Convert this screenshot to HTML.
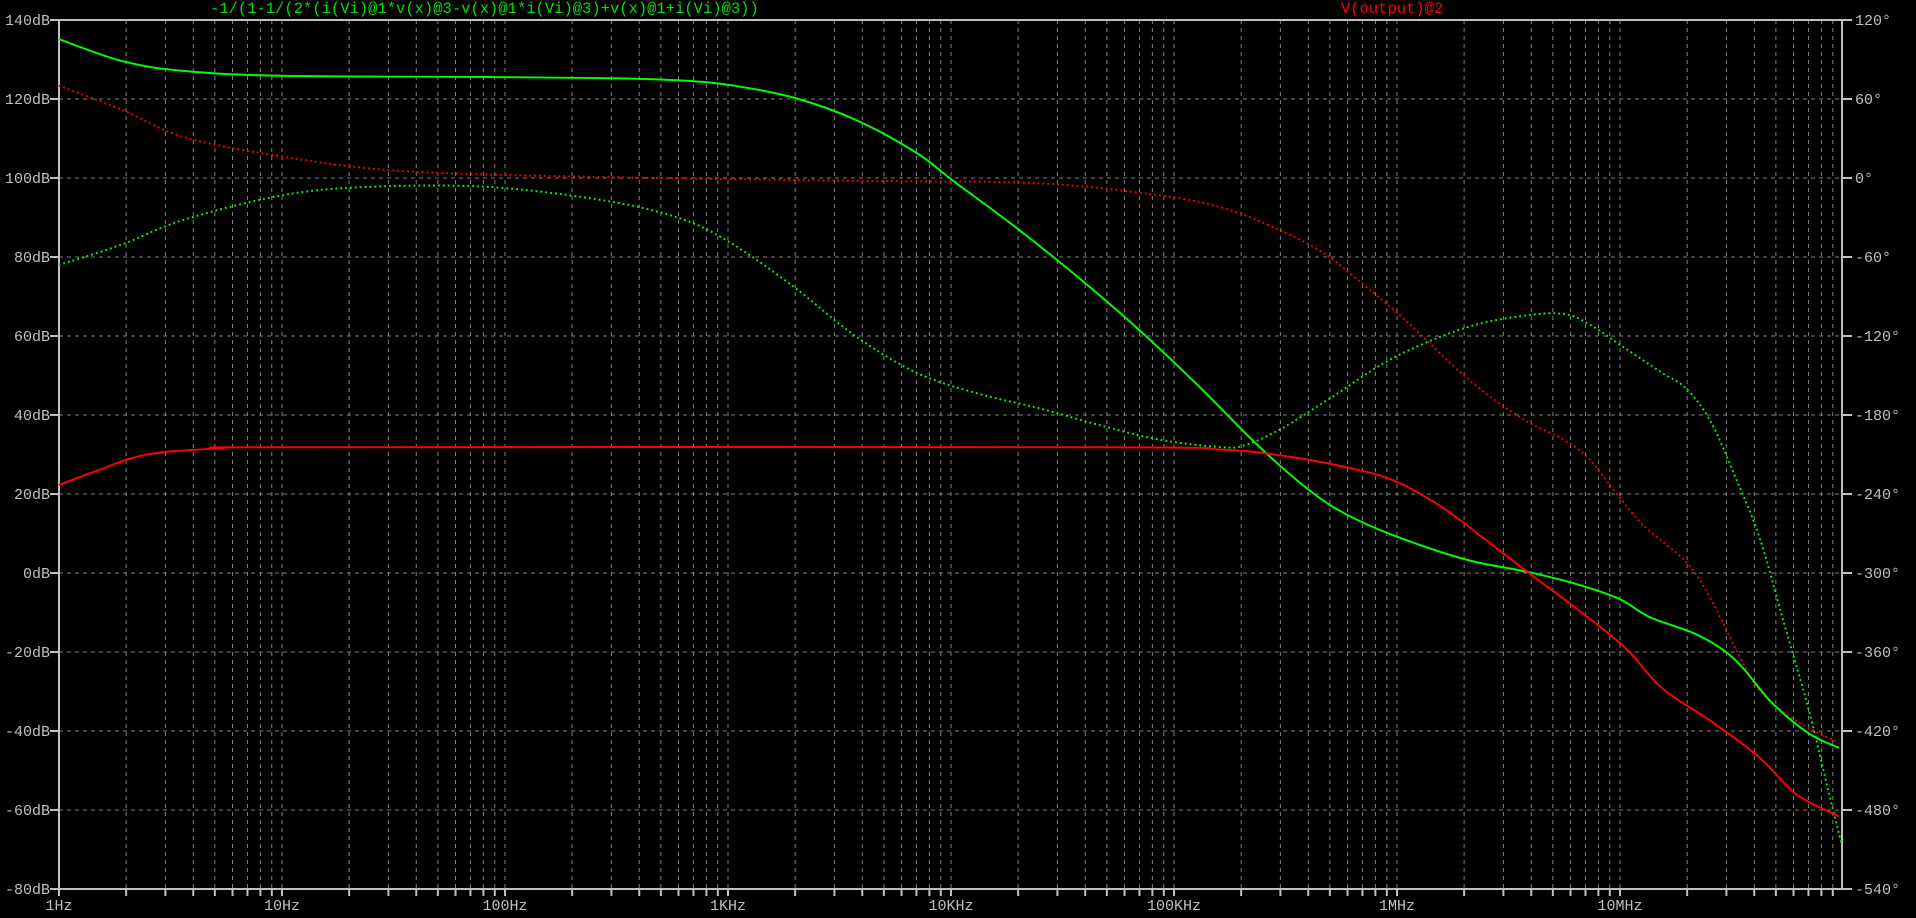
<!DOCTYPE html>
<html><head><meta charset="utf-8"><style>
html,body{margin:0;padding:0;background:#000;width:1916px;height:918px;overflow:hidden}
svg{display:block}
text{font-family:"Liberation Mono",monospace}
</style></head><body>
<svg id="s" width="1916" height="918" viewBox="0 0 1916 918" xmlns="http://www.w3.org/2000/svg">
<rect width="1916" height="918" fill="#000"/>
<g id="grid"></g>
<text x="210" y="13" fill="#00e000" font-size="15.5">-1/(1-1/(2*(i(Vi)@1*v(x)@3-v(x)@1*i(Vi)@3)+v(x)@1+i(Vi)@3))</text>
<text x="1341" y="13" fill="#ff0000" font-size="15.5">V(output)@2</text>
<g id="curves" transform="scale(1.2219)" fill="none" stroke-linejoin="round">
<polyline stroke="#00ff00" stroke-width="1.6" stroke-dasharray="1.5 2.5" points="48,217 100,200 150,180 230,160 300,153 400,153 500,165 560,180 600,200 650,235 700,275 750,305 800,322 850,334 900,348 950,360 1000,366 1020,364 1050,350 1090,325 1140,293 1200,268 1250,258 1280,257 1300,265 1330,285 1360,305 1380,318 1400,345 1420,390 1440,440 1460,510 1480,580 1497,650 1507,690"/>
<polyline stroke="#ff0000" stroke-width="1.6" stroke-dasharray="1.5 2.5" points="48,70 100,90 150,112 230,128 330,140 500,145 700,148 850,150 950,160 1000,170 1040,185 1080,205 1110,228 1150,262 1190,300 1220,325 1250,345 1280,360 1300,375 1320,400 1345,430 1380,460 1400,490 1420,530 1440,565 1470,590 1505,608"/>
<polyline stroke="#00ff00" stroke-width="1.6" points="48,32 100,50 150,58 230,62 400,63 500,64 560,66 600,70 650,80 700,98 750,125 780,148 830,185 880,225 930,268 980,315 1030,365 1070,400 1100,420 1140,438 1200,458 1250,468 1290,478 1325,490 1350,505 1390,520 1420,540 1450,575 1480,600 1505,612"/>
<polyline stroke="#ff0000" stroke-width="1.6" points="48,397 80,385 120,372 180,367 240,366 900,366 1000,368 1050,373 1100,382 1140,393 1180,415 1220,445 1250,468 1290,498 1330,530 1360,563 1400,590 1440,620 1470,650 1505,668"/>
</g>
</svg>
<script>
var g=document.getElementById('grid'),NS='http://www.w3.org/2000/svg';
function el(t,a,txt){var e=document.createElementNS(NS,t);for(var k in a)e.setAttribute(k,a[k]);if(txt)e.textContent=txt;g.appendChild(e);return e;}
var L=59,R=1842,T=20,B=889,D=223;
for(var d=0;d<8;d++)for(var m=1;m<=9;m++){
 var x=L+D*(d+Math.log10(m));
 if(x>L+1&&x<R-1)el('line',{x1:x,y1:T,x2:x,y2:B,stroke:'#808080','stroke-width':1,'stroke-dasharray':'4 4'});
 el('line',{x1:x,y1:B,x2:x,y2:B+7,stroke:'#c0c0c0','stroke-width':2});
}
var fl=['1Hz','10Hz','100Hz','1KHz','10KHz','100KHz','1MHz','10MHz'];
for(var d=0;d<8;d++)el('text',{x:L+D*d,y:910,fill:'#c0c0c0','font-size':15,'text-anchor':'middle'},fl[d]);
for(var i=0;i<=11;i++){
 var y=T+i*(B-T)/11;
 if(i>0&&i<11)el('line',{x1:L,y1:y,x2:R,y2:y,stroke:'#808080','stroke-width':1,'stroke-dasharray':'4 4'});
 el('line',{x1:L-9,y1:y,x2:L,y2:y,stroke:'#c0c0c0','stroke-width':2});
 el('line',{x1:R,y1:y,x2:R+10,y2:y,stroke:'#c0c0c0','stroke-width':2});
 el('text',{x:L-9,y:y+5,fill:'#c0c0c0','font-size':15,'text-anchor':'end'},(140-20*i)+'dB');
 el('text',{x:R+13,y:y+5,fill:'#c0c0c0','font-size':15},(120-60*i)+'°');
}
el('rect',{x:L,y:T,width:R-L,height:B-T,fill:'none',stroke:'#c0c0c0','stroke-width':2});
// smooth curves (Catmull-Rom)
var pls=document.querySelectorAll('#curves polyline');
pls.forEach(function(pl){
 var p=pl.getAttribute('points').trim().split(/\s+/).map(function(s){return s.split(',').map(Number);});
 var d='M'+p[0][0]+','+p[0][1];
 for(var i=0;i<p.length-1;i++){
  var p0=p[i-1]||p[i],p1=p[i],p2=p[i+1],p3=p[i+2]||p2;
  d+=' C'+(p1[0]+(p2[0]-p0[0])/6)+','+(p1[1]+(p2[1]-p0[1])/6)+' '+(p2[0]-(p3[0]-p1[0])/6)+','+(p2[1]-(p3[1]-p1[1])/6)+' '+p2[0]+','+p2[1];
 }
 var path=document.createElementNS(NS,'path');
 ['stroke','stroke-width','stroke-dasharray'].forEach(function(a){var v=pl.getAttribute(a);if(v)path.setAttribute(a,v);});
 path.setAttribute('d',d);
 pl.parentNode.replaceChild(path,pl);
});
</script>
</body></html>
